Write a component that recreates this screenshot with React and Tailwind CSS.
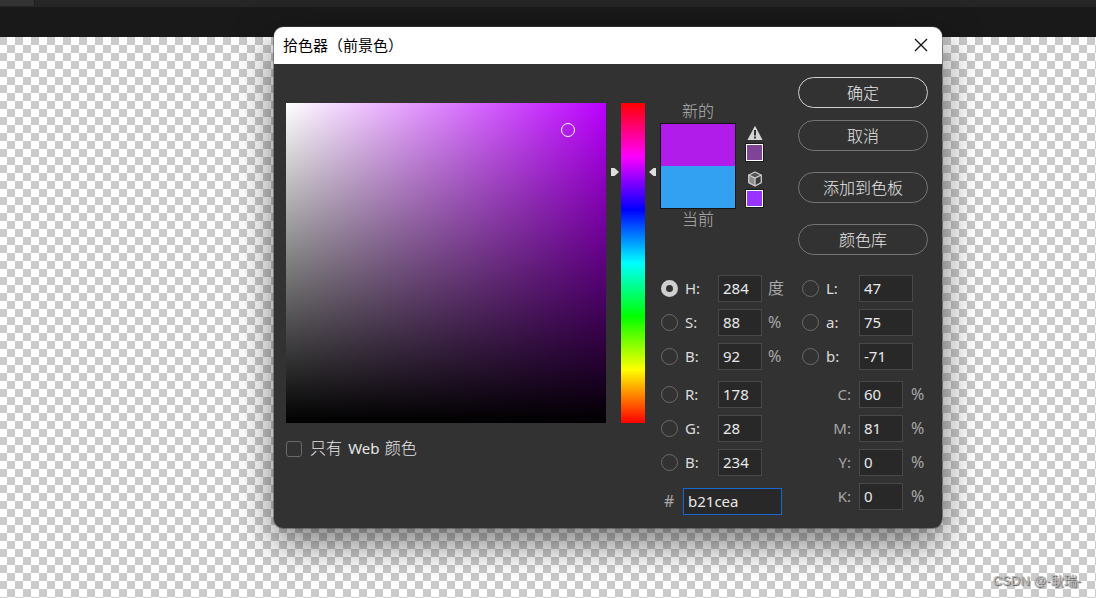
import React, { useState } from "react";
import clsx from "clsx";

const MODEL_ROWS = [
  [
    { id: "hue", label: "H:", value: "284", unit: "度", name: "色相" },
    { id: "sat", label: "S:", value: "88", unit: "%", name: "饱和度" },
    { id: "bri", label: "B:", value: "92", unit: "%", name: "亮度" },
  ],
  [
    { id: "red", label: "R:", value: "178", name: "红" },
    { id: "green", label: "G:", value: "28", name: "绿" },
    { id: "blue", label: "B:", value: "234", name: "蓝" },
  ],
];

const LAB_ROWS = [
  { id: "lab-l", label: "L:", value: "47", name: "Lab L" },
  { id: "lab-a", label: "a:", value: "75", name: "Lab a" },
  { id: "lab-b", label: "b:", value: "-71", name: "Lab b" },
];

const CMYK_ROWS = [
  { id: "cyan", label: "C:", value: "60" },
  { id: "magenta", label: "M:", value: "81" },
  { id: "yellow", label: "Y:", value: "0" },
  { id: "black", label: "K:", value: "0" },
];

const INPUT =
  "h-[27px] border border-[#484848] bg-[#282828] px-1 pb-px text-[#e8e8e8] outline-none";

function ChannelRow({ field, wide, channel, onChannel }) {
  return (
    <div className="flex h-[27px] items-center">
      <input
        type="radio"
        name="channel"
        id={field.id}
        checked={channel === field.id}
        onChange={() => onChannel(field.id)}
        className="ml-px size-[17px] shrink-0 appearance-none rounded-full border border-[#6a6a6a] checked:border-5 checked:border-[#cfcfcf]"
      />
      <label htmlFor={field.id} className="w-10 shrink-0 pb-px pl-[7px] text-[#dcdcdc]">
        {field.label}
      </label>
      <input
        type="text"
        aria-label={field.name}
        defaultValue={field.value}
        className={clsx(INPUT, wide ? "w-[54px]" : "w-11")}
      />
      {field.unit && (
        <span className="pb-px pl-[6px] text-base leading-5 text-[#a8a8a8]">{field.unit}</span>
      )}
    </div>
  );
}

function DialogButton({ primary, className, children }) {
  return (
    <button
      type="button"
      className={clsx(
        "h-[31px] rounded-full border text-base leading-5 text-[#e6e6e6]",
        primary ? "border-[#d0d0d0]" : "border-[#757575]",
        className,
      )}
    >
      {children}
    </button>
  );
}

function WarningIcon() {
  return (
    <svg viewBox="0 0 16 16" className="size-4">
      <path d="M8 0.8 15.6 15H0.4Z" fill="#d4d4d4" />
      <path d="M7 5h2v5.5H7zM7 11.5h2v2H7z" fill="#303030" />
    </svg>
  );
}

function CubeIcon() {
  return (
    <svg viewBox="0 0 16 16" className="size-4">
      <path d="M8 1 14.3 4 8 7.2 1.7 4Z" fill="#555" />
      <path d="M1.7 4 8 7.2V15L1.7 11.6Z" fill="#8c8c8c" />
      <path d="M14.3 4 8 7.2V15l6.3-3.4Z" fill="#3a3a3a" />
      <path
        d="M8 1 14.3 4v7.6L8 15l-6.3-3.4V4ZM1.7 4 8 7.2 14.3 4M8 7.2V15"
        fill="none"
        stroke="#cdcdcd"
        strokeWidth="1.3"
        strokeLinejoin="round"
      />
    </svg>
  );
}

function HueSlider() {
  return (
    <div className="relative mt-[39px] ml-[5px] h-80 w-[46px] shrink-0 pr-3 pl-[10px]">
      <div className="h-full bg-[linear-gradient(to_bottom,#f00,#f0f,#00f,#0ff,#0f0,#ff0,#f00)]" />
      <svg viewBox="0 0 8 10" className="absolute top-16 left-0 h-[10px] w-2">
        <path d="M0 1H3.5L8 5 3.5 9H0Z" fill="#dedede" />
      </svg>
      <svg viewBox="0 0 8 10" className="absolute top-16 right-0 h-[10px] w-2">
        <path d="M7 1H4.5L0 5l4.5 4H7Z" fill="#dedede" />
      </svg>
    </div>
  );
}

function ColorPicker() {
  const [channel, setChannel] = useState("hue");

  return (
    <div
      role="dialog"
      aria-label="拾色器（前景色）"
      className="absolute top-[27px] left-1/4 w-[668px] overflow-hidden rounded-[9px] bg-[#323232] shadow-[0_0_0_1px_rgba(70,70,70,0.5),0_14px_40px_rgba(0,0,0,0.55)]"
    >
      {/* Title bar */}
      <div className="flex h-[37px] items-center justify-between bg-white pr-[14px] pb-[2px] pl-[9px]">
        <h1 className="text-[15px] leading-5 text-black">拾色器（前景色）</h1>
        <button type="button" aria-label="关闭" className="flex size-[14px] items-center">
          <svg viewBox="0 0 14 14" className="size-[14px]">
            <path d="M1 1 13 13M13 1 1 13" stroke="#111" strokeWidth="1.3" fill="none" />
          </svg>
        </button>
      </div>

      <div className="flex pr-[14px] pb-[13px] pl-3 text-[15px] leading-5">
        {/* Saturation / brightness field */}
        <div className="w-80 shrink-0 pt-[39px]">
          <div className="relative h-80 bg-[linear-gradient(to_top,#000,transparent),linear-gradient(to_right,#fff,#b0f)]">
            <div className="absolute top-5 left-[275px] size-[14px] rounded-full border border-white" />
          </div>
          <label className="mt-[15px] flex items-center gap-2 text-base leading-5 font-light text-[#e6e6e6]">
            <input
              type="checkbox"
              className="size-4 appearance-none rounded-[3px] border border-[#6a6a6a] checked:bg-[#cfcfcf]"
            />
            <span className="pb-px">
              只有 <span className="mr-px ml-[2px] text-[15px] font-normal">Web</span> 颜色
            </span>
          </label>
        </div>

        <HueSlider />

        <div className="ml-auto w-[268px] pt-[13px] font-light">
          <div className="flex">
            {/* New vs current swatch */}
            <div className="w-[76px] pt-6 text-center text-base leading-5 text-[#b4b4b4]">
              <div>新的</div>
              <div className="mt-[2px] border border-[#141414]">
                <div className="h-[42px] bg-[#b21cea]" />
                <div className="h-[42px] bg-[#33a1f2]" />
              </div>
              <div>当前</div>
            </div>
            <div className="ml-[10px] flex flex-col items-center pt-12">
              <WarningIcon />
              <div className="mt-[3px] size-[17px] border border-white bg-[#7f4498] outline outline-[#1a1a1a]" />
              <div className="mt-[10px] mb-[3px] h-4">
                <CubeIcon />
              </div>
              <div className="size-[17px] border border-white bg-[#9933ff] outline outline-[#1a1a1a]" />
            </div>
            <div className="ml-auto flex w-[130px] flex-col">
              <DialogButton primary>确定</DialogButton>
              <DialogButton className="mt-3">取消</DialogButton>
              <DialogButton className="mt-[21px]">添加到色板</DialogButton>
              <DialogButton className="mt-[21px]">颜色库</DialogButton>
            </div>
          </div>

          <div className="mt-5 flex justify-between font-normal">
            <div className="flex flex-col gap-[11px]">
              {MODEL_ROWS.map((rows, i) => (
                <div key={i} className="flex flex-col gap-[7px]">
                  {rows.map((field) => (
                    <ChannelRow
                      key={field.id}
                      field={field}
                      channel={channel}
                      onChannel={setChannel}
                    />
                  ))}
                </div>
              ))}
              <div className="flex items-center pt-px">
                <label htmlFor="hex" className="w-[23px] pb-px pl-1 text-base leading-5 text-[#a8a8a8]">
                  #
                </label>
                <input
                  id="hex"
                  type="text"
                  defaultValue="b21cea"
                  className="h-[27px] w-[99px] border border-[#1767d2] bg-[#282828] px-1 pb-px text-[#e8e8e8] outline-none"
                />
              </div>
            </div>

            <div className="flex w-[127px] flex-col gap-[11px]">
              <div className="flex flex-col gap-[7px]">
                {LAB_ROWS.map((field) => (
                  <ChannelRow
                    key={field.id}
                    field={field}
                    wide
                    channel={channel}
                    onChannel={setChannel}
                  />
                ))}
              </div>
              <div className="flex flex-col gap-[7px]">
                {CMYK_ROWS.map((field) => (
                  <div key={field.id} className="flex h-[27px] items-center text-[#a8a8a8]">
                    <label htmlFor={field.id} className="w-[58px] pr-2 pb-px text-right">
                      {field.label}
                    </label>
                    <input
                      id={field.id}
                      type="text"
                      defaultValue={field.value}
                      className={clsx(INPUT, "w-11")}
                    />
                    <span className="pb-px pl-2 text-base leading-5">%</span>
                  </div>
                ))}
              </div>
            </div>
          </div>
        </div>
      </div>
    </div>
  );
}

export default function App() {
  return (
    <div className="relative flex min-h-screen flex-col overflow-hidden bg-[#191919] font-['Noto_Sans','Noto_Sans_CJK_SC',sans-serif]">
      {/* Tab strip */}
      <div className="h-[7px] bg-[#262626]">
        <div className="h-[6px] w-[35px] border-r border-[#1e1e1e] bg-[#333333]" />
      </div>
      <div className="h-[30px]" />

      {/* Transparent canvas */}
      <div className="flex flex-1 items-end justify-end bg-[conic-gradient(#fff_25%,#cbcbcb_0_50%,#fff_0_75%,#cbcbcb_0)] bg-size-[16px_16px] bg-position-[-1px_0] pr-[15px] pb-[7px]">
        <span className="font-['Liberation_Sans','Noto_Sans_CJK_SC',sans-serif] text-[13px] leading-5 text-[#b9b9b9] [text-shadow:1px_1px_1px_#555]">
          CSDN @-耿瑞-
        </span>
      </div>

      <ColorPicker />
    </div>
  );
}
